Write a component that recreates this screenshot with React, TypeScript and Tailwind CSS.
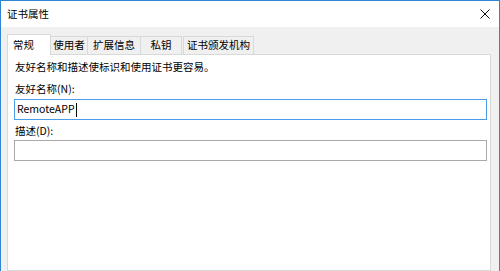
const font = { fontFamily: '"Noto Sans CJK SC", "Noto Sans", sans-serif' };

const tabs = ["常规", "使用者", "扩展信息", "私钥", "证书颁发机构"];
const tabWidths = ["w-[44px]", "w-[37px]", "w-[53px]", "w-[41px]", "w-[71px]"];

export default function App() {
  return (
    <div
      className="w-[500px] h-[271px] overflow-hidden flex flex-col bg-[#f0f0f0] border-t border-l border-r border-[#2f84d6] text-black"
      style={font}
    >
      {/* title bar */}
      <div className="h-[26px] shrink-0 bg-white flex items-center justify-between pl-[6px] pr-[8px]">
        <span className="text-[10.5px] leading-none">证书属性</span>
        <svg width="10" height="10" viewBox="0 0 10 10" className="mr-[1px]">
          <path d="M0.5 0.5 L9.5 9.5 M9.5 0.5 L0.5 9.5" stroke="#111" strokeWidth="1" fill="none" />
        </svg>
      </div>

      <div className="flex-1 flex flex-col pl-[6px] pr-[8px] pt-[7px]">
        {/* tabs */}
        <div className="h-[20px] flex items-end shrink-0">
          {tabs.map((t, i) =>
            i === 0 ? (
              <div
                key={t}
                className={`${tabWidths[i]} h-[21px] -mb-px relative z-10 bg-white border-t border-l border-r border-[#d9d9d9] flex items-center pl-[5px] text-[10.5px] leading-none`}
              >
                {t}
              </div>
            ) : (
              <div
                key={t}
                className={`${tabWidths[i]} h-[18px] bg-[#f0f0f0] border-t border-r border-[#d9d9d9] flex items-center justify-center text-[10.5px] leading-none ${i === 4 ? "border-l ml-[1px]" : ""}`}
              >
                {t}
              </div>
            )
          )}
        </div>

        {/* panel */}
        <div className="flex-1 bg-white border border-[#d9d9d9] pl-[6px] pr-[3px] text-[10.5px]">
          <div className="mt-[5px] h-[14px] leading-[14px] pl-[1px]">友好名称和描述使标识和使用证书更容易。</div>
          <div className="mt-[8px] h-[14px] leading-[14px] pl-[1px]">友好名称(N):</div>
          <div className="mt-[3px] h-[21px] border border-[#4a9ce6] flex items-center pl-[2px]">
            <span className="text-[10.5px] leading-none">RemoteAPP</span>
            <span className="w-px h-[14px] bg-black ml-[1px]" />
          </div>
          <div className="mt-[4px] h-[14px] leading-[14px] pl-[1px]">描述(D):</div>
          <div className="mt-[2px] h-[21px] border border-[#a9a9a9]" />
        </div>
      </div>
    </div>
  );
}
